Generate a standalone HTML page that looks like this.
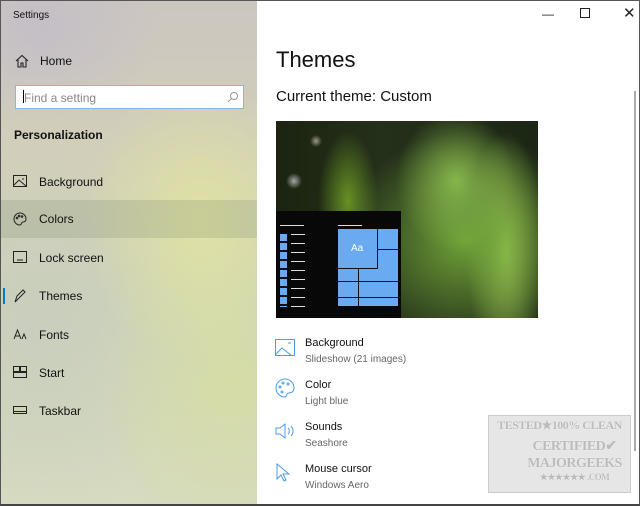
<!DOCTYPE html>
<html><head><style>
*{margin:0;padding:0;box-sizing:border-box}
body{width:640px;height:506px;overflow:hidden;font-family:"Liberation Sans",sans-serif;background:#fff;position:relative}
.win{position:absolute;inset:0;border:1px solid #555;border-bottom:2px solid #444;overflow:hidden}
.left{position:absolute;left:0;top:0;width:256px;height:506px;
background:
radial-gradient(ellipse 120px 140px at 200px 220px,rgba(225,228,160,.9),rgba(225,228,160,0)),
radial-gradient(ellipse 140px 160px at 230px 380px,rgba(215,222,160,.8),rgba(215,222,160,0)),
radial-gradient(ellipse 120px 90px at 40px 30px,rgba(195,190,200,.9),rgba(195,190,200,0)),
radial-gradient(ellipse 160px 200px at 40px 320px,rgba(200,205,190,.8),rgba(200,205,190,0)),
linear-gradient(180deg,#cbc6c0 0%,#d3d0b8 35%,#cdd3ba 60%,#d7dbc0 100%);}
.t{position:absolute;font-size:12px;color:#111}
.nav{position:absolute;left:0;width:256px;height:38px;font-size:12px;color:#111}
.nav span{position:absolute;left:38px;top:12px}
.nav svg{position:absolute;left:12px;top:12px}
.right{position:absolute;left:256px;top:0;right:0;bottom:0;background:#fff}
.item{position:absolute;left:48px;font-size:11px;color:#111}
.item small{display:block;color:#666;font-size:10px;margin-top:5px}
.ic{position:absolute;left:18px}
.wm div{white-space:nowrap}
</style></head><body><div class="win">
<div class="left">
<div class="t" style="left:12px;top:9px;font-size:10px">Settings</div>
<svg style="position:absolute;left:14px;top:53px" width="14" height="14" viewBox="0 0 14 14" fill="none" stroke="#222" stroke-width="1.1"><path d="M1 7L7 1.5 13 7M3 5.5V13H6V9H8V13H11V5.5"/></svg>
<div class="t" style="left:39px;top:53px">Home</div>
<div style="position:absolute;left:14px;top:84px;width:229px;height:24px;background:#fff;border:1px solid #8ab4e8"></div>
<div style="position:absolute;left:22px;top:89px;width:1px;height:13px;background:#000"></div>
<div class="t" style="left:23px;top:90px;color:#888">Find a setting</div>
<svg style="position:absolute;left:226px;top:90px" width="12" height="12" viewBox="0 0 12 12" fill="none" stroke="#999"><circle cx="7" cy="5" r="3.5"/><path d="M4.5 7.5L1 11"/></svg>
<div class="t" style="left:13px;top:127px;font-weight:bold">Personalization</div>
<div class="nav" style="top:162px"><svg width="14" height="12" viewBox="0 0 14 12" fill="none" stroke="#222"><rect x=".5" y=".5" width="13" height="11"/><path d="M1 10L6 5l7 6M9 4h2"/></svg><span>Background</span></div>
<div class="nav" style="top:199px;background:rgba(140,150,120,.28)"><svg width="14" height="14" viewBox="0 0 14 14" fill="none" stroke="#222"><path d="M7 1a6 6 0 1 0 0 12c2 0 1-3 3-3s3-1 3-3A6 6 0 0 0 7 1z"/><circle cx="4" cy="6" r=".8"/><circle cx="6" cy="4" r=".8"/><circle cx="9" cy="4.5" r=".8"/></svg><span>Colors</span></div>
<div class="nav" style="top:238px"><svg width="14" height="12" viewBox="0 0 14 12" fill="none" stroke="#222"><rect x=".5" y=".5" width="13" height="11"/><path d="M4 9h6"/></svg><span>Lock screen</span></div>
<div class="nav" style="top:276px"><div style="position:absolute;left:2px;top:11px;width:2px;height:16px;background:#0078d7"></div><svg width="14" height="14" viewBox="0 0 14 14" fill="none" stroke="#222"><path d="M2 13l2-6 6-6 2 2-6 6z"/></svg><span>Themes</span></div>
<div class="nav" style="top:315px"><svg width="14" height="14" viewBox="0 0 14 14" fill="none" stroke="#222"><path d="M1 11L4.5 2 8 11M2.5 8h4M9 11l2-5 2 5"/></svg><span>Fonts</span></div>
<div class="nav" style="top:353px"><svg width="14" height="12" viewBox="0 0 14 12" fill="none" stroke="#222"><rect x=".5" y=".5" width="6" height="5"/><rect x="7.5" y=".5" width="6" height="5"/><rect x=".5" y="6.5" width="13" height="5"/></svg><span>Start</span></div>
<div class="nav" style="top:391px"><svg width="14" height="12" viewBox="0 0 14 12" fill="none" stroke="#222"><rect x=".5" y="2.5" width="13" height="7"/><path d="M1 7.5h12"/></svg><span>Taskbar</span></div>
</div>
<div class="right">
<div style="position:absolute;left:285px;top:6px;font-size:12px;color:#222">—</div>
<div style="position:absolute;left:323px;top:7px;width:10px;height:10px;border:1px solid #222"></div>
<div style="position:absolute;left:366px;top:3px;font-size:15px;color:#222">✕</div>
<div style="position:absolute;left:19px;top:46px;font-size:22px;color:#111">Themes</div>
<div style="position:absolute;left:19px;top:87px;font-size:15px;color:#111">Current theme: Custom</div>
<div style="position:absolute;left:19px;top:120px;width:262px;height:197px;overflow:hidden;
background:
radial-gradient(ellipse 30px 70px at 72px 80px,rgba(120,170,40,.8),rgba(0,0,0,0)),
radial-gradient(circle 8px at 18px 60px,rgba(200,200,200,.8),rgba(0,0,0,0)),
radial-gradient(circle 6px at 40px 20px,rgba(220,200,180,.7),rgba(0,0,0,0)),
radial-gradient(ellipse 60px 70px at 180px 60px,rgba(140,190,80,.9),rgba(0,0,0,0)),
radial-gradient(ellipse 120px 110px at 190px 120px,rgba(120,175,60,.9),rgba(0,0,0,0)),
radial-gradient(ellipse 40px 120px at 230px 130px,rgba(160,200,90,.95),rgba(0,0,0,0)),
linear-gradient(90deg,#1a2410,#25301a 40%,#1b2614);">
<div style="position:absolute;left:0;top:90px;width:125px;height:107px;background:#080808"></div>
<div style="position:absolute;left:4px;top:113px;height:73px;background:repeating-linear-gradient(180deg,#69aaf0 0 7px,#111 7px 9px);width:7px"></div>
<div style="position:absolute;left:15px;top:113px;width:14px;height:73px;background:repeating-linear-gradient(180deg,#ddd 0 1px,transparent 1px 9px)"></div>
<div style="position:absolute;left:4px;top:104px;width:24px;height:1px;background:#ddd"></div>
<div style="position:absolute;left:62px;top:104px;width:24px;height:1px;background:#ddd"></div>
<div style="position:absolute;left:62px;top:108px;width:60px;height:77px;background:#69aaf0"></div>
<div style="position:absolute;left:62px;top:108px;width:40px;height:40px;border-right:1px solid #111;border-bottom:1px solid #111;color:#fff;font-size:10px;padding:14px 0 0 13px">Aa</div>
<div style="position:absolute;left:102px;top:128px;width:20px;height:1px;background:#111"></div>
<div style="position:absolute;left:62px;top:160px;width:60px;height:1px;background:#111"></div>
<div style="position:absolute;left:82px;top:148px;width:1px;height:37px;background:#111"></div>
<div style="position:absolute;left:62px;top:176px;width:60px;height:1px;background:#111"></div>
</div>
<svg class="ic" style="top:338px" width="20" height="17" viewBox="0 0 20 17" fill="none" stroke="#4d9be8"><rect x=".5" y=".5" width="19" height="16"/><path d="M1 15l6-6 10 8M13 4h3"/></svg>
<div class="item" style="top:336px">Background<small>Slideshow (21 images)</small></div>
<svg class="ic" style="top:377px" width="20" height="20" viewBox="0 0 20 20" fill="none" stroke="#4d9be8"><path d="M10 1a9 9 0 1 0 0 18c2 0 1-4 4-4s5-2 5-5A9 9 0 0 0 10 1z"/><circle cx="5" cy="9" r="1"/><circle cx="8" cy="5" r="1"/><circle cx="13" cy="6" r="1"/><circle cx="7" cy="14" r="1"/></svg>
<div class="item" style="top:378px">Color<small>Light blue</small></div>
<svg class="ic" style="top:421px" width="22" height="18" viewBox="0 0 22 18" fill="none" stroke="#4d9be8"><path d="M1 6h4l5-4v14l-5-4H1z"/><path d="M13 6a4 4 0 0 1 0 6M16 4a7 7 0 0 1 0 10"/></svg>
<div class="item" style="top:420px">Sounds<small>Seashore</small></div>
<svg class="ic" style="top:462px" width="16" height="20" viewBox="0 0 16 20" fill="none" stroke="#4d9be8"><path d="M2 1v15l4-4 3 6 2-1-3-6h6z"/></svg>
<div class="item" style="top:462px">Mouse cursor<small>Windows Aero</small></div>
<div class="wm" style="position:absolute;left:231px;top:414px;width:143px;height:78px;background:#e6e6e6;border:1px solid #ccc;color:#bbb;font-family:'Liberation Serif',serif;font-weight:bold;text-align:center;text-shadow:0 0 1px #fff;letter-spacing:-0.5px">
<div style="font-size:12px;margin-top:2px">TESTED★100% CLEAN</div>
<div style="font-size:14px;margin-top:5px;margin-left:30px">CERTIFIED✔</div>
<div style="font-size:14px;margin-top:1px;margin-left:30px">MAJORGEEKS</div>
<div style="font-size:9px;margin-left:30px">★★★★★★ .COM</div>
</div>
<div style="position:absolute;right:3px;top:90px;width:2px;height:360px;background:#aaa"></div>
</div>
</div></body></html>
